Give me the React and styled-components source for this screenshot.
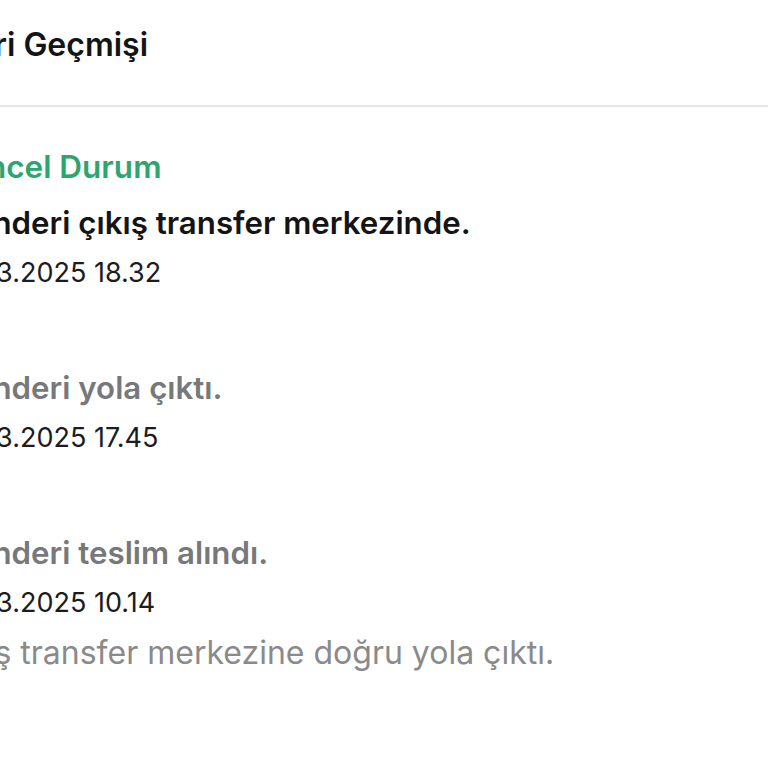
import React from "react";
import styled, { createGlobalStyle } from "styled-components";

const Global = createGlobalStyle`
  html, body { margin: 0; padding: 0; background: #fff; }
  body { overflow: hidden; font-family: Inter, "Noto Sans", sans-serif; }
`;

const Page = styled.div`
  width: 900px;
  margin-left: -50px;
`;

const Header = styled.header`
  padding: 25px 0 40px 0;
  border-bottom: 2px solid #e7e7e7;
`;

const Title = styled.h1`
  margin: 0 0 0 -58px;
  font-size: 32px;
  line-height: 40px;
  font-weight: 600;
  color: #141414;
  white-space: nowrap;
`;

const List = styled.section`
  padding-top: 40px;
`;

const Current = styled.div`
  margin: 0 0 16px -6px;
  font-size: 31.5px;
  line-height: 40px;
  font-weight: 600;
  color: #2fa56e;
  white-space: nowrap;
`;

const Item = styled.div`
  & + & { margin-top: 75px; }
`;

const EventTitle = styled.div`
  font-size: 31.25px;
  line-height: 40px;
  font-weight: 600;
  color: ${(p) => (p.$active ? "#141414" : "#76787a")};
  white-space: nowrap;
`;

const EventDate = styled.div`
  margin-top: 10px;
  font-size: 27px;
  line-height: 40px;
  font-weight: 400;
  color: #1c1c1c;
`;

const EventDesc = styled.div`
  margin: 10px 0 0 -12px;
  font-size: 32px;
  line-height: 40px;
  font-weight: 400;
  color: #8a8a8a;
  white-space: nowrap;
`;

const events = [
  { title: "Gönderi çıkış transfer merkezinde.", date: "11.03.2025 18.32", active: true },
  { title: "Gönderi yola çıktı.", date: "11.03.2025 17.45" },
  { title: "Gönderi teslim alındı.", date: "11.03.2025 10.14", desc: "Çıkış transfer merkezine doğru yola çıktı." },
];

export default function App() {
  return (
    <>
      <Global />
      <Page>
        <Header>
          <Title>Gönderi Geçmişi</Title>
        </Header>
        <List>
          <Current>Güncel Durum</Current>
          {events.map((e, i) => (
            <Item key={i}>
              <EventTitle $active={e.active}>{e.title}</EventTitle>
              <EventDate>{e.date}</EventDate>
              {e.desc && <EventDesc>{e.desc}</EventDesc>}
            </Item>
          ))}
        </List>
      </Page>
    </>
  );
}
